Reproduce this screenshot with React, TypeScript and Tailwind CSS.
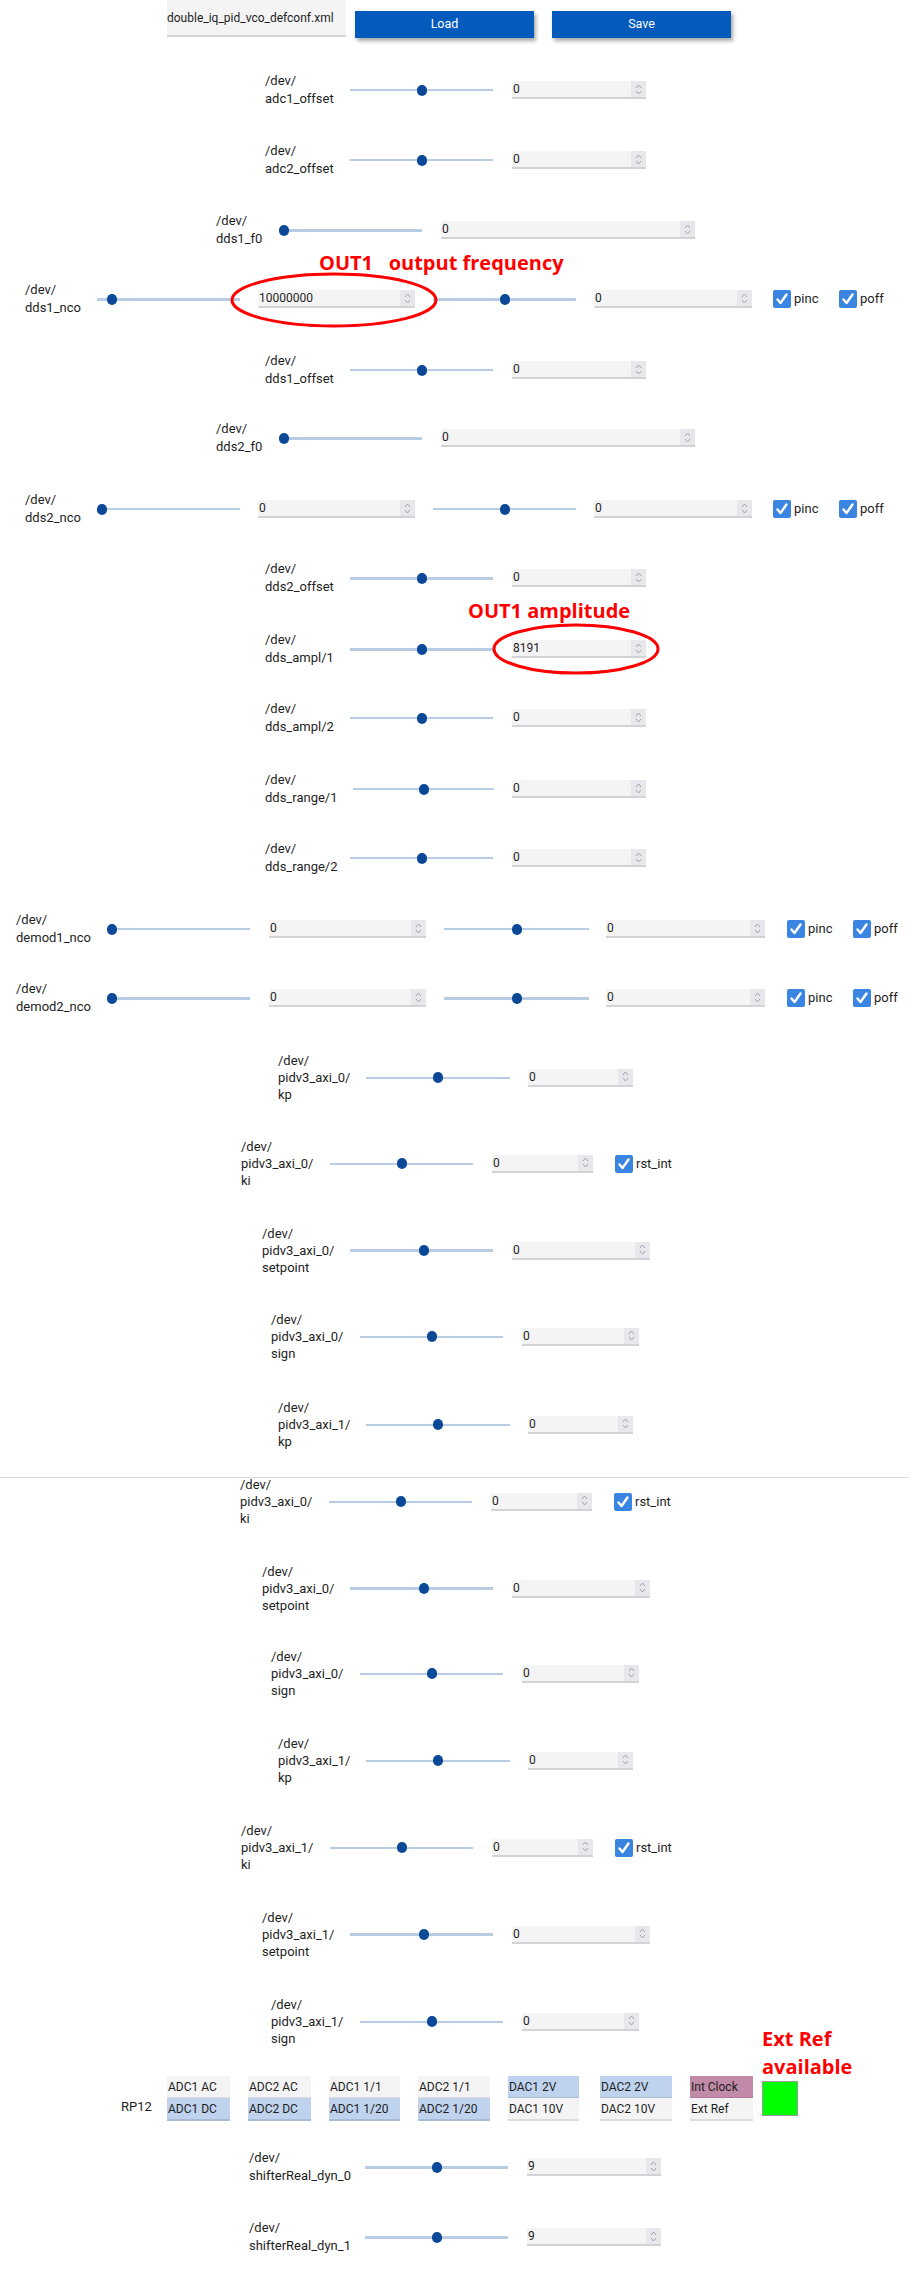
import React from 'react';

type SimpleRow = {
  kind: 'simple';
  lines: string[];
  mt: string;
  ml: string;
  lw: string;
  sw: string;
  gap: string;
  spw: string;
  thumb: number;
  value: string;
  thick?: boolean;
  rst?: boolean;
};

type NcoRow = {
  kind: 'nco';
  lines: string[];
  mt: string;
  variant: 'dds' | 'demod';
  t1: number;
  v1: string;
  thick?: boolean;
};

type Sep = { kind: 'sep' };
type Rp = { kind: 'rp' };

type Row = SimpleRow | NcoRow | Sep | Rp;

const off = (name: string, mt: string, value = '0', thick = false): SimpleRow => ({
  kind: 'simple',
  lines: ['/dev/', name],
  mt,
  ml: 'ml-[265px]',
  lw: 'w-[85px]',
  sw: 'w-[143px]',
  gap: 'ml-[19px]',
  spw: 'w-[134px]',
  thumb: 0.5,
  value,
  thick,
});

const f0 = (name: string, mt: string): SimpleRow => ({
  kind: 'simple',
  lines: ['/dev/', name],
  mt,
  ml: 'ml-[216px]',
  lw: 'w-[63px]',
  sw: 'w-[143px]',
  gap: 'ml-[19px]',
  spw: 'w-[254px]',
  thumb: 0,
  value: '0',
  thick: true,
});

const kp = (axi: string, mt: string): SimpleRow => ({
  kind: 'simple',
  lines: ['/dev/', `pidv3_axi_${axi}/`, 'kp'],
  mt,
  ml: 'ml-[278px]',
  lw: 'w-[88px]',
  sw: 'w-[144px]',
  gap: 'ml-[18px]',
  spw: 'w-[105px]',
  thumb: 0.5,
  value: '0',
});

const ki = (axi: string, mt: string, ml = 'ml-[241px]'): SimpleRow => ({
  kind: 'simple',
  lines: ['/dev/', `pidv3_axi_${axi}/`, 'ki'],
  mt,
  ml,
  lw: 'w-[89px]',
  sw: 'w-[143px]',
  gap: 'ml-[19px]',
  spw: 'w-[101px]',
  thumb: 0.5,
  value: '0',
  rst: true,
});

const setpoint = (axi: string, mt: string): SimpleRow => ({
  kind: 'simple',
  lines: ['/dev/', `pidv3_axi_${axi}/`, 'setpoint'],
  mt,
  ml: 'ml-[262px]',
  lw: 'w-[88px]',
  sw: 'w-[143px]',
  gap: 'ml-[19px]',
  spw: 'w-[138px]',
  thumb: 0.52,
  value: '0',
  thick: true,
});

const sign = (axi: string, mt: string): SimpleRow => ({
  kind: 'simple',
  lines: ['/dev/', `pidv3_axi_${axi}/`, 'sign'],
  mt,
  ml: 'ml-[271px]',
  lw: 'w-[89px]',
  sw: 'w-[143px]',
  gap: 'ml-[19px]',
  spw: 'w-[117px]',
  thumb: 0.5,
  value: '0',
});

const shifter = (name: string, mt: string): SimpleRow => ({
  kind: 'simple',
  lines: ['/dev/', name],
  mt,
  ml: 'ml-[249px]',
  lw: 'w-[116px]',
  sw: 'w-[143px]',
  gap: 'ml-[19px]',
  spw: 'w-[134px]',
  thumb: 0.5,
  value: '9',
  thick: true,
});

const ROWS: Row[] = [
  off('adc1_offset', 'mt-[32px]'),
  off('adc2_offset', 'mt-[34px]'),
  f0('dds1_f0', 'mt-[34px]'),
  { kind: 'nco', lines: ['/dev/', 'dds1_nco'], mt: 'mt-[33px]', variant: 'dds', t1: 0.075, v1: '10000000', thick: true },
  off('dds1_offset', 'mt-[35px]'),
  f0('dds2_f0', 'mt-[32px]'),
  { kind: 'nco', lines: ['/dev/', 'dds2_nco'], mt: 'mt-[35px]', variant: 'dds', t1: 0, v1: '0' },
  off('dds2_offset', 'mt-[33px]', '0', true),
  off('dds_ampl/1', 'mt-[35px]', '8191', true),
  off('dds_ampl/2', 'mt-[33px]'),
  {
    kind: 'simple',
    lines: ['/dev/', 'dds_range/1'],
    mt: 'mt-[35px]',
    ml: 'ml-[265px]',
    lw: 'w-[88px]',
    sw: 'w-[141px]',
    gap: 'ml-[18px]',
    spw: 'w-[134px]',
    thumb: 0.5,
    value: '0',
  },
  off('dds_range/2', 'mt-[33px]'),
  { kind: 'nco', lines: ['/dev/', 'demod1_nco'], mt: 'mt-[35px]', variant: 'demod', t1: 0, v1: '0' },
  { kind: 'nco', lines: ['/dev/', 'demod2_nco'], mt: 'mt-[33px]', variant: 'demod', t1: 0, v1: '0', thick: true },
  kp('0', 'mt-[36px]'),
  ki('0', 'mt-[35px]'),
  setpoint('0', 'mt-[36px]'),
  sign('0', 'mt-[35px]'),
  kp('1', 'mt-[37px]'),
  { kind: 'sep' },
  ki('0', '-mt-[2px]', 'ml-[240px]'),
  setpoint('0', 'mt-[36px]'),
  sign('0', 'mt-[34px]'),
  kp('1', 'mt-[36px]'),
  ki('1', 'mt-[36px]'),
  setpoint('1', 'mt-[36px]'),
  sign('1', 'mt-[36px]'),
  { kind: 'rp' },
  shifter('shifterReal_dyn_0', 'mt-[28px]'),
  shifter('shifterReal_dyn_1', 'mt-[34px]'),
];

function Slider({ className, pos, thick }: { className: string; pos: number; thick?: boolean }) {
  return (
    <div className={`relative flex h-[11px] shrink-0 items-center ${className}`}>
      <div className={`w-full bg-[#b8cce4] ${thick ? 'h-[3px]' : 'h-[2px]'}`} />
      <div
        className="absolute top-0 -ml-[5px] h-[11px] w-[10px] rounded-full bg-[#0b4897]"
        style={{ left: `calc(5px + ${pos} * (100% - 10px))` }}
      />
    </div>
  );
}

function SpinBox({ className, value }: { className: string; value: string }) {
  return (
    <div className={`flex h-[18px] shrink-0 border-b-2 border-[#d3d3d7] bg-[#f4f4f4] ${className}`}>
      <div className="flex-1 pl-[1px] text-[12px] leading-[16px] text-[#1e1e1e]">{value}</div>
      <div className="flex w-[15px] items-center justify-center bg-[#e8e8ec]">
        <svg width="7" height="13" viewBox="0 0 7 13">
          <path d="M1 5 L3.5 2 L6 5 M1 8 L3.5 11 L6 8" fill="none" stroke="#a2a2ac" strokeWidth="1" />
        </svg>
      </div>
    </div>
  );
}

function Check({ label, className }: { label: string; className: string }) {
  return (
    <div className={`flex shrink-0 items-center ${className}`}>
      <div className="flex h-[18px] w-[18px] items-center justify-center rounded-[2px] bg-[#3a85e2]">
        <svg width="14" height="14" viewBox="0 0 14 14">
          <path
            d="M2.5 7.5 L5.5 11 L11.5 2.5"
            fill="none"
            stroke="white"
            strokeWidth="2.4"
            strokeLinecap="round"
            strokeLinejoin="round"
          />
        </svg>
      </div>
      <span className="ml-[3px] text-[13px] text-[#1e1e1e]">{label}</span>
    </div>
  );
}

function Label({ lines, className }: { lines: string[]; className: string }) {
  const lead = lines.length > 2 ? 'leading-[17px]' : 'leading-[18px]';
  return (
    <div className={`shrink-0 whitespace-nowrap text-[13px] text-[#1e1e1e] ${lead} ${className}`}>
      {lines.map((l, i) => (
        <div key={i}>{l}</div>
      ))}
    </div>
  );
}

function SimpleLine({ row }: { row: SimpleRow }) {
  const h = row.lines.length > 2 ? 'h-[51px]' : 'h-[36px]';
  return (
    <div className={`flex items-center ${h} ${row.mt}`}>
      <Label lines={row.lines} className={`${row.ml} ${row.lw}`} />
      <Slider className={row.sw} pos={row.thumb} thick={row.thick} />
      <SpinBox className={`${row.gap} ${row.spw}`} value={row.value} />
      {row.rst && <Check label="rst_int" className="ml-[22px]" />}
    </div>
  );
}

function NcoLine({ row }: { row: NcoRow }) {
  const dds = row.variant === 'dds';
  return (
    <div className={`flex h-[36px] items-center ${row.mt}`}>
      <Label lines={row.lines} className={dds ? 'ml-[25px] w-[72px]' : 'ml-[16px] w-[91px]'} />
      <Slider className="w-[143px]" pos={row.t1} thick={row.thick} />
      <SpinBox className={dds ? 'ml-[18px] w-[157px]' : 'ml-[19px] w-[157px]'} value={row.v1} />
      <Slider className={dds ? 'ml-[18px] w-[143px]' : 'ml-[18px] w-[145px]'} pos={0.5} thick={row.thick} />
      <SpinBox className={dds ? 'ml-[18px] w-[158px]' : 'ml-[17px] w-[159px]'} value="0" />
      <Check label="pinc" className={dds ? 'ml-[21px] w-[66px]' : 'ml-[22px] w-[66px]'} />
      <Check label="poff" className="" />
    </div>
  );
}

type Cell = { text: string; tone: 'gray' | 'blue' | 'mauve' };

const RP_COLS: { ml: string; w: string; top: Cell; bottom: Cell }[] = [
  { ml: '', w: 'w-[63px]', top: { text: 'ADC1 AC', tone: 'gray' }, bottom: { text: 'ADC1 DC', tone: 'blue' } },
  { ml: 'ml-[18px]', w: 'w-[63px]', top: { text: 'ADC2 AC', tone: 'gray' }, bottom: { text: 'ADC2 DC', tone: 'blue' } },
  { ml: 'ml-[18px]', w: 'w-[71px]', top: { text: 'ADC1 1/1', tone: 'gray' }, bottom: { text: 'ADC1 1/20', tone: 'blue' } },
  { ml: 'ml-[18px]', w: 'w-[72px]', top: { text: 'ADC2 1/1', tone: 'gray' }, bottom: { text: 'ADC2 1/20', tone: 'blue' } },
  { ml: 'ml-[18px]', w: 'w-[71px]', top: { text: 'DAC1 2V', tone: 'blue' }, bottom: { text: 'DAC1 10V', tone: 'gray' } },
  { ml: 'ml-[21px]', w: 'w-[72px]', top: { text: 'DAC2 2V', tone: 'blue' }, bottom: { text: 'DAC2 10V', tone: 'gray' } },
  { ml: 'ml-[18px]', w: 'w-[63px]', top: { text: 'Int Clock', tone: 'mauve' }, bottom: { text: 'Ext Ref', tone: 'gray' } },
];

const TONE: Record<Cell['tone'], string> = {
  gray: 'bg-[#f4f4f4] border-[#dcdcdf]',
  blue: 'bg-[#bfd3ee] border-[#a8bcd8]',
  mauve: 'bg-[#c28aa9] border-[#b07c99]',
};

function RpLine() {
  return (
    <div className="mt-[29px] flex h-[45px] items-start">
      <div className="ml-[121px] w-[46px] shrink-0 pt-[22px] text-[13px] leading-[18px] text-[#1e1e1e]">RP12</div>
      {RP_COLS.map((c, i) => (
        <div key={i} className={`flex shrink-0 flex-col ${c.ml} ${c.w}`}>
          <div className={`flex h-[22px] items-center border-b pl-[1px] text-[12px] text-[#1e1e1e] ${TONE[c.top.tone]}`}>
            {c.top.text}
          </div>
          <div className={`flex h-[23px] items-center border-b-2 pl-[1px] text-[12px] text-[#1e1e1e] ${TONE[c.bottom.tone]}`}>
            {c.bottom.text}
          </div>
        </div>
      ))}
      <div className="ml-[9px] mt-[5px] h-[35px] w-[36px] shrink-0 border border-[#9a9a9a] bg-[#00ff00]" />
    </div>
  );
}

export default function App() {
  return (
    <div className="relative w-full bg-white pb-[16px] font-[Roboto,sans-serif]">
      <div className="flex h-[40px] items-start">
        <div className="ml-[167px] flex h-[37px] w-[179px] items-center border-b-2 border-[#d6d6d6] bg-[#f4f4f4] text-[12px] text-[#1e1e1e]">
          double_iq_pid_vco_defconf.xml
        </div>
        <button
          type="button"
          className="ml-[9px] mt-[11px] h-[27px] w-[179px] bg-[#055bbb] text-[12.5px] text-white shadow-[2px_3px_4px_rgba(0,0,0,0.35)]"
        >
          Load
        </button>
        <button
          type="button"
          className="ml-[18px] mt-[11px] h-[27px] w-[179px] bg-[#055bbb] text-[12.5px] text-white shadow-[2px_3px_4px_rgba(0,0,0,0.35)]"
        >
          Save
        </button>
      </div>

      {ROWS.map((row, i) => {
        if (row.kind === 'sep') return <div key={i} className="mt-[27px] h-px w-full bg-[#d9d9d9]" />;
        if (row.kind === 'rp') return <RpLine key={i} />;
        if (row.kind === 'nco') return <NcoLine key={i} row={row} />;
        return <SimpleLine key={i} row={row} />;
      })}

      {/* red annotations drawn over the screenshot */}
      <div className="pointer-events-none absolute left-[319px] top-[249px] whitespace-pre font-['Open_Sans',sans-serif] text-[20px] font-bold leading-[28px] text-[#ff0000]">
        {'OUT1   output frequency'}
      </div>
      <svg className="pointer-events-none absolute left-[229px] top-[271px]" width="210" height="58" viewBox="0 0 210 58">
        <ellipse cx="105" cy="29" rx="102" ry="26" fill="none" stroke="#ff0000" strokeWidth="3" />
      </svg>
      <div className="pointer-events-none absolute left-[468px] top-[597px] whitespace-pre font-['Open_Sans',sans-serif] text-[20px] font-bold leading-[28px] text-[#ff0000]">
        OUT1 amplitude
      </div>
      <svg className="pointer-events-none absolute left-[491px] top-[622px]" width="170" height="54" viewBox="0 0 170 54">
        <ellipse cx="85" cy="27" rx="82" ry="24" fill="none" stroke="#ff0000" strokeWidth="3" />
      </svg>
      <div className="pointer-events-none absolute left-[762px] top-[2025px] font-['Open_Sans',sans-serif] text-[20px] font-bold leading-[28px] text-[#ff0000]">
        <div>Ext Ref</div>
        <div>available</div>
      </div>
    </div>
  );
}
